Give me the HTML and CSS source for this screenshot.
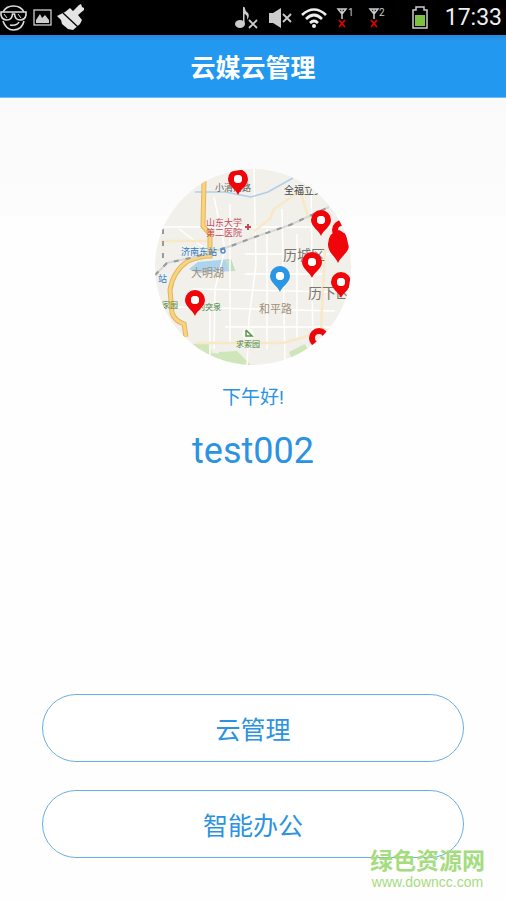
FILE: index.html
```
<!DOCTYPE html>
<html lang="zh-CN">

<head>
    <meta charset="UTF-8">
    <meta name="viewport" content="width=device-width, initial-scale=1">
    <title>云媒云管理</title>
    <link rel="stylesheet" href="styles.css">
</head>

<body>
    <div class="status">
        <svg class="icon" width="28" height="28" viewBox="0 0 28 28" fill="none" stroke="#ddd" stroke-width="1.6">
            <path d="M3 8Q6 2 13.500 2Q21 2 24 8M3 17Q6 26 13.500 26Q22 26 24 17"/>
            <path d="M1 8H26V11Q25 16 20 16Q15 16 14.500 10H12.500Q12 16 7 16Q2 16 1 11Z"/>
            <path d="M4 10L7 14M18 10L21 14" stroke-width="1"/>
            <path d="M10 21Q17 22 19 18"/>
        </svg>
        <svg class="icon gap-s" width="19" height="17" viewBox="0 0 19 17">
            <rect x="1" y="1" width="17" height="15" fill="none" stroke="#ccc" stroke-width="1.3"/>
            <path d="M3 14V11L7 5L9 9L12 6L16 11V14Z" fill="#ccc"/>
        </svg>
        <svg class="icon gap-s" width="28" height="28" viewBox="0 0 28 28" fill="#e4e4e4">
            <path d="M0 12L8 8L13 4L16 7L22 1L24 0L25 3L27 4L27 6L21 11L25 16L23 20L16 26L11 25L5 20L4 16Z"/>
            <path d="M6 9L21 23" stroke="#000" stroke-width="1.300"/>
        </svg>
        <span class="space"></span>
        <svg class="icon" width="24" height="24" viewBox="0 0 24 24" fill="#ccc">
            <ellipse cx="5" cy="18" rx="5" ry="4"/>
            <path d="M8 1H9.500Q10 5 13 7Q15 10 12 14Q13 9 9.500 8V18H8Z"/>
            <path d="M14 14L22 22M22 14L14 22" stroke="#ccc" stroke-width="1.800"/>
        </svg>
        <svg class="icon gap-m" width="24" height="22" viewBox="0 0 24 22" fill="#ccc">
            <path d="M1 6H5L13 1V21L5 16H1Z"/>
            <path d="M15 7L23 15M23 7L15 15" stroke="#ccc" stroke-width="1.800"/>
        </svg>
        <svg class="icon gap-m" width="26" height="22" viewBox="0 0 26 22" fill="none" stroke="#eee" stroke-width="2.600">
            <path d="M1 8Q13 -3 25 8M5 12Q13 4 21 12M9 16Q13 12 17 16"/>
            <circle cx="13" cy="19" r="2" fill="#eee" stroke="none"/>
        </svg>
        <svg class="icon gap-m" width="18" height="22" viewBox="0 0 18 22" fill="none" stroke="#ccc" stroke-width="1.500">
            <path d="M2 2H10L6 7ZM6 2V12"/>
            <path d="M3 13L9 20M9 13L3 20" stroke="#e00000" stroke-width="1.800"/>
            <text class="sim" x="12" y="9">1</text>
        </svg>
        <svg class="icon gap-l" width="18" height="22" viewBox="0 0 18 22" fill="none" stroke="#ccc" stroke-width="1.500">
            <path d="M2 2H10L6 7ZM6 2V12"/>
            <path d="M3 13L9 20M9 13L3 20" stroke="#e00000" stroke-width="1.800"/>
            <text class="sim" x="11" y="9">2</text>
        </svg>
        <svg class="icon gap-xl" width="16" height="23" viewBox="0 0 16 23">
            <path d="M1 4H4V1H12V4H15V22H1Z" fill="#000" stroke="#ccc" stroke-width="1.500"/>
            <rect x="3" y="9" width="10" height="11" fill="#7cc142"/>
        </svg>
        <span class="clock">17:33</span>
    </div>

    <header class="titlebar">
        <h1>云媒云管理</h1>
    </header>

    <main class="home">
        <svg class="map" viewBox="0 0 196 196" role="img" aria-label="地图">
            <defs>
                <clipPath id="round"><circle cx="98" cy="98" r="98"/></clipPath>
                <path id="pin" d="M0 0C-2 -6 -10 -9 -10 -16A10 10 0 0 1 10 -16C10 -9 2 -6 0 0ZM0 -20A4 4 0 0 0 0 -12A4 4 0 0 0 0 -20Z"/>
            </defs>
            <g clip-path="url(#round)">
                <rect width="196" height="196" fill="#f1f0eb"/>
                <!-- parks and lake -->
                <path d="M36 175L55 174L57 184L68 185V196H36ZM64 183L82 182L96 196H64ZM134 183L150 175L153 181L137 190Z" fill="#cfe6bb"/>
                <path d="M43 93L76 90L80 102L42 104L34 100Z" fill="#aed3ef"/>
                <path d="M70 91L76 90L80 102L74 102Z" fill="#bfe0c1"/>
                <!-- small streets -->
                <g fill="none" stroke="#fff" stroke-width="1.500">
                    <path d="M99 0L101 96L94 150L92 196M59 28L70 80L60 120L59 180M127 40L130 196M156 0L158 196"/>
                    <path d="M0 58H196M38 120L180 123M20 138L180 142M70 158H190M90 105H170M90 85H190"/>
                    <path d="M75 35V175M112 60V180M142 65V170M35 130L55 138V196M24 60L48 78"/>
                </g>
                <!-- river and main roads -->
                <path d="M40 23H70L96 28L113 23L138 9" fill="none" stroke="#b1ceec" stroke-width="1.500"/>
                <g fill="none" stroke="#f8e8c6" stroke-width="2.500">
                    <path d="M6 72H55M99 62L115 50L119 40L145 22L154 50M42 174H128L160 165L178 160M170 80L166 160"/>
                </g>
                <path d="M49 12L48 57L55 65V87Q45 87 33 92Q18 102 15 121L17 144Q20 152 29 155L31 168" fill="none" stroke="#dfb565" stroke-width="5"/>
                <path d="M49 12L48 57L55 65V87Q45 87 33 92Q18 102 15 121L17 144Q20 152 29 155L31 168" fill="none" stroke="#fad37c" stroke-width="3"/>
                <path d="M0 106L12 94L40 88L76 77L97 69L135 56L174 38" fill="none" stroke="#d8d8d8" stroke-width="2"/>
                <path d="M0 106L12 94L40 88L76 77L97 69L135 56L174 38M8 60V95" fill="none" stroke="#999" stroke-width="2" stroke-dasharray="5 7"/>
                <g class="place">
                    <text x="60" y="22">小清河路</text>
                    <text class="dark" x="129" y="25">全福立交</text>
                    <text class="red" x="51" y="57">山东大学</text>
                    <text class="red" x="51" y="67">第二医院</text>
                    <text class="blue" x="26" y="86">济南东站</text>
                    <text class="blue" x="3" y="113">站</text>
                    <text class="green" x="7" y="139">家园</text>
                    <text class="green" x="42" y="141">趵突泉</text>
                    <text class="green" x="81" y="178">求索园</text>
                    <text class="tan" x="36" y="108">大明湖</text>
                    <text class="tan" x="104" y="144">和平路</text>
                    <text class="area" x="128" y="91">历城区</text>
                    <text class="area" x="153" y="129">历下区</text>
                </g>
                <path d="M93 55V61M90 58H96" stroke="#c6485a" stroke-width="2"/>
                <circle cx="68" cy="82" r="2" fill="none" stroke="#4b8ed6" stroke-width="1.500"/>
                <circle cx="93" cy="165" r="6" fill="#fafaf6"/>
                <path d="M91 161V167H97L91 161" fill="none" stroke="#59944f" stroke-width="1.500"/>
                <g fill="#f0050b">
                    <use href="#pin" x="83" y="26"/>
                    <use href="#pin" x="166" y="67"/>
                    <use href="#pin" x="187" y="77"/>
                    <path d="M183 94C181 88 173 84 173 75Q174 63 184 61Q194 65 194 76C194 84 185 88 183 94Z"/>
                    <use href="#pin" x="157" y="109"/>
                    <use href="#pin" x="186" y="129"/>
                    <use href="#pin" x="40" y="147"/>
                    <use href="#pin" x="164" y="185"/>
                    <use href="#pin" x="125" y="123" fill="#2b96e3"/>
                </g>
                <!-- white centres of the pins -->
                <g fill="#fff">
                    <circle cx="83" cy="10" r="4"/>
                    <circle cx="166" cy="51" r="4"/>
                    <circle cx="157" cy="93" r="4"/>
                    <circle cx="186" cy="113" r="4"/>
                    <circle cx="40" cy="131" r="4"/>
                    <circle cx="125" cy="107" r="4"/>
                </g>
            </g>
        </svg>
        <p class="greeting">下午好!</p>
        <p class="user">test002</p>

        <div class="actions">
            <button type="button">云管理</button>
            <button type="button">智能办公</button>
        </div>
    </main>

    <div class="watermark">
        <strong>绿色资源网</strong>
        <span>www.downcc.com</span>
    </div>
</body>

</html>
```
FILE: styles.css
```
* {
    box-sizing: border-box;
}

body {
    position: relative;
    display: flex;
    flex-direction: column;
    min-height: 100vh;
    margin: 0;
    background: #fefefe;
    color: #2b93e0;
    font-family: Roboto, "Noto Sans CJK SC", sans-serif;
}

.status {
    display: flex;
    align-items: center;
    height: 35px;
    padding-right: 4px;
    background: #000;
    color: #eee;
}

.icon {
    flex: none;
}

.space {
    flex: 1;
}

.gap-s {
    margin-left: 5px;
}

.gap-m {
    margin-left: 9px;
}

.gap-l {
    margin-left: 14px;
}

.gap-xl {
    margin-left: 26px;
}

.sim {
    fill: #ccc;
    stroke: none;
    font-size: 10px;
}

.clock {
    margin-left: 17px;
    font-size: 23px;
    line-height: 37px;
}

.titlebar {
    height: 63px;
    padding-top: 2px;
    background: linear-gradient(#2488d8, #2398f0 6px);
    border-bottom: 1px solid #6dbdf5;
    color: #fff;
    text-align: center;
}

.titlebar h1 {
    margin: 0;
    font-size: 25px;
    font-weight: 700;
    line-height: 63px;
}

.home {
    display: flex;
    flex: 1;
    flex-direction: column;
    align-items: center;
    padding: 71px 42px 42px;
    background: linear-gradient(#fafafa, #fcfcfc 117px, #fefefe 118px);
}

.map {
    width: 196px;
    height: 196px;
}

.place {
    fill: #66615b;
    font-size: 9px;
}

.place .dark {
    fill: #444;
    font-size: 10px;
}

.place .red {
    fill: #c6485a;
}

.place .blue {
    fill: #2f7cc9;
}

.place .green {
    fill: #47853e;
    font-size: 8px;
}

.place .tan {
    fill: #a08e75;
    font-size: 11px;
}

.place .area {
    fill: #7d7670;
    font-size: 14px;
}

.greeting,
.user {
    margin: 0;
}

.greeting {
    margin-top: 18px;
    font-size: 19px;
    line-height: 30px;
}

.user {
    margin-top: 16px;
    font-size: 36px;
    line-height: 44px;
}

.actions {
    display: flex;
    flex-direction: column;
    gap: 28px;
    width: 100%;
    margin-top: auto;
}

.actions button {
    height: 68px;
    border: 1px solid #67afe0;
    border-radius: 34px;
    background: #fff;
    color: #2b93e0;
    font-family: inherit;
    font-size: 25px;
}

.watermark {
    position: absolute;
    right: 21px;
    bottom: 10px;
    display: flex;
    flex-direction: column;
    align-items: center;
    color: #a5dc7f;
    pointer-events: none;
}

.watermark strong {
    font-size: 23px;
    line-height: 24px;
}

.watermark span {
    font-family: "Liberation Sans", sans-serif;
    font-size: 14px;
    line-height: 16px;
}
```
